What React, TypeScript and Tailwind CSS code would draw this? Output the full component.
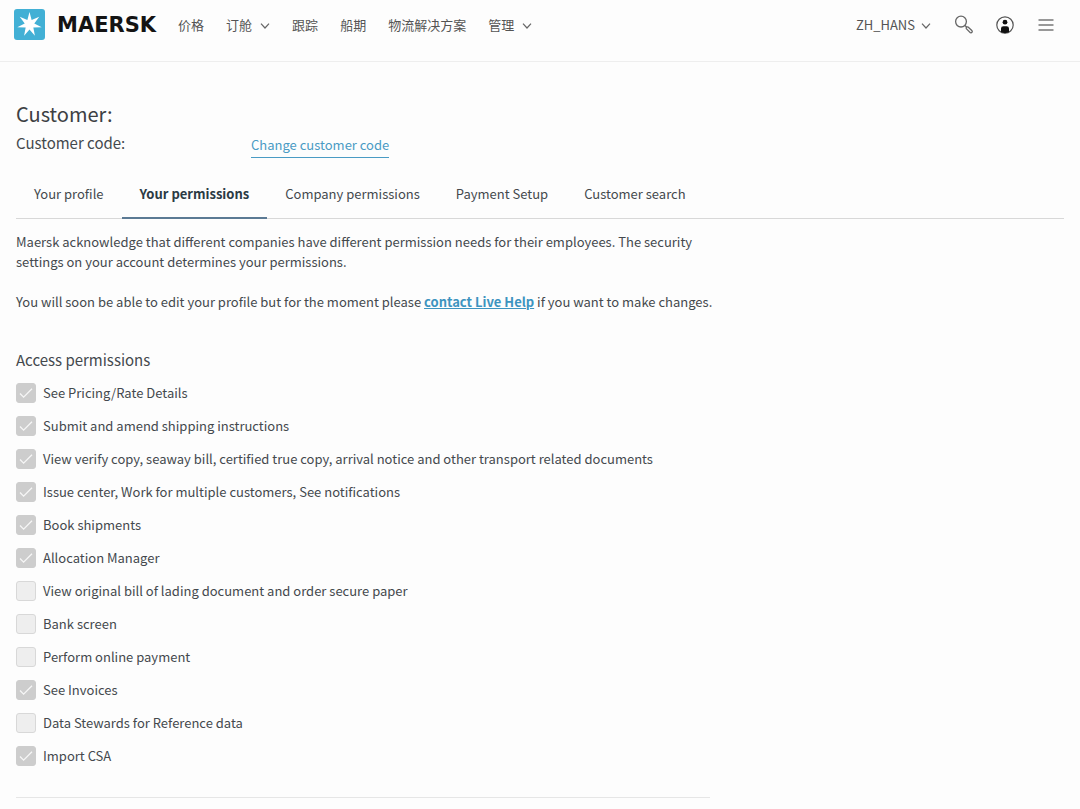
import { useState } from "react";
import type { ReactNode } from "react";

const NAV = [
  { label: "价格", menu: false },
  { label: "订舱", menu: true },
  { label: "跟踪", menu: false },
  { label: "船期", menu: false },
  { label: "物流解决方案", menu: false },
  { label: "管理", menu: true },
];

const TABS = ["Your profile", "Your permissions", "Company permissions", "Payment Setup", "Customer search"];

// Permissions are read-only here, so every box is rendered disabled.
const PERMISSIONS = [
  { id: "pricing", label: "See Pricing/Rate Details", granted: true },
  { id: "instructions", label: "Submit and amend shipping instructions", granted: true },
  {
    id: "documents",
    label: "View verify copy, seaway bill, certified true copy, arrival notice and other transport related documents",
    granted: true,
  },
  { id: "issues", label: "Issue center, Work for multiple customers, See notifications", granted: true },
  { id: "book", label: "Book shipments", granted: true },
  { id: "allocation", label: "Allocation Manager", granted: true },
  { id: "lading", label: "View original bill of lading document and order secure paper", granted: false },
  { id: "bank", label: "Bank screen", granted: false },
  { id: "payment", label: "Perform online payment", granted: false },
  { id: "invoices", label: "See Invoices", granted: true },
  { id: "stewards", label: "Data Stewards for Reference data", granted: false },
  { id: "csa", label: "Import CSA", granted: true },
];

// Seven-pointed star, alternating outer and inner radius.
const STAR_POINTS = Array.from({ length: 14 }, (_, i) => {
  const r = i % 2 === 0 ? 12.5 : 4.9;
  const a = (Math.PI * i) / 7 - Math.PI / 2;
  return `${(15.5 + r * Math.cos(a)).toFixed(2)},${(15.5 + r * Math.sin(a)).toFixed(2)}`;
}).join(" ");

function Logo() {
  return (
    <a href="#home" className="flex items-center gap-3">
      <svg width="31" height="31" viewBox="0 0 31 31" aria-hidden="true">
        <rect width="31" height="31" rx="3" fill="#42b0d5" />
        <polygon points={STAR_POINTS} fill="#fff" />
      </svg>
      <span className="font-['DejaVu_Sans',sans-serif] text-[21px] leading-6 font-bold text-[#141414]">MAERSK</span>
    </a>
  );
}

function Chevron() {
  return (
    <svg width="10" height="6" viewBox="0 0 10 6" fill="none" stroke="#666" strokeWidth="1.2" className="mt-[2px]" aria-hidden="true">
      <path d="M1 0.6 5 5 9 0.6" />
    </svg>
  );
}

function IconButton({ label, children }: { label: string; children: ReactNode }) {
  return (
    <button type="button" aria-label={label} className="flex h-6 w-5 items-center justify-center">
      {children}
    </button>
  );
}

function Header() {
  return (
    <header className="flex h-[62px] items-start border-b border-[#eeeeee] pt-[9px] pr-6 pl-[14px]">
      <Logo />
      <nav className="ml-[22px] flex h-8 items-center gap-[22px] text-[13px] text-[#545454]">
        {NAV.map((n) =>
          n.menu ? (
            <button key={n.label} type="button" className="flex items-center gap-2">
              {n.label}
              <Chevron />
            </button>
          ) : (
            <a key={n.label} href="#nav">
              {n.label}
            </a>
          )
        )}
      </nav>
      <div className="ml-auto flex h-8 items-center gap-[21px]">
        <button type="button" className="mr-[2px] flex items-center gap-[6px] text-[13px] text-[#545454]">
          ZH_HANS
          <Chevron />
        </button>
        <IconButton label="Search">
          <svg width="20" height="20" viewBox="0 0 20 20" fill="none" stroke="#666" strokeWidth="1.3">
            <circle cx="7" cy="6.6" r="5.4" />
            <path d="m11 10.6 1.8 1.6" />
            <path d="M12.3 13.7c-.6-1.1.7-2.3 1.8-1.7l3.7 3.4c1.1 1.1.1 2.8-1.5 2.3z" />
          </svg>
        </IconButton>
        <IconButton label="Account">
          <svg width="18" height="18" viewBox="0 0 18 18">
            <circle cx="9" cy="9" r="8.2" fill="none" stroke="#555" strokeWidth="1.2" />
            <circle cx="9" cy="6.2" r="2.4" fill="#111" />
            <path d="M5 16v-3.4a2.4 2.4 0 0 1 2.4-2.4h3.2a2.4 2.4 0 0 1 2.4 2.4V16a8 8 0 0 1-8 0z" fill="#111" />
          </svg>
        </IconButton>
        <IconButton label="Menu">
          <svg width="16" height="14" viewBox="0 0 16 14" stroke="#777" strokeWidth="1.4">
            <path d="M0.5 2h15M0.5 7h15M0.5 12h15" />
          </svg>
        </IconButton>
      </div>
    </header>
  );
}

function PermissionRow({ id, label, granted }: { id: string; label: string; granted: boolean }) {
  return (
    <li className="flex h-[33px] items-center gap-[7px]">
      <span className="grid">
        <input
          id={id}
          type="checkbox"
          disabled
          defaultChecked={granted}
          className="col-start-1 row-start-1 h-5 w-5 appearance-none rounded-[3px] border border-[#d8d8d8] bg-[#eeeeee] checked:border-[#cdcdcd] checked:bg-[#cdcdcd]"
        />
        {granted && (
          <svg
            className="pointer-events-none col-start-1 row-start-1"
            width="20"
            height="20"
            viewBox="0 0 20 20"
            fill="none"
            stroke="#f6f6f6"
            strokeWidth="1.3"
            aria-hidden="true"
          >
            <path d="m4 10.5 3.6 3.6L16 5.8" />
          </svg>
        )}
      </span>
      <label htmlFor={id}>{label}</label>
    </li>
  );
}

export default function App() {
  const [tab, setTab] = useState("Your permissions");

  return (
    <div className="min-h-screen bg-[#fdfdfd] font-['Noto_Sans_CJK_SC',sans-serif] text-[13px] leading-5 text-[#44494d]">
      <Header />
      <main className="px-4 pt-10">
        <h1 className="text-[20px] leading-6 text-[#3c4043]">Customer:</h1>
        <div className="flex h-[34px] items-center">
          <h2 className="w-[235px] text-[15px] leading-6">Customer code:</h2>
          <a href="#change" className="mt-1 border-b border-[#4a9bc4] leading-6 text-[#4a9bc4]">
            Change customer code
          </a>
        </div>

        <div role="tablist" className="mt-[10px] flex border-b border-[#d8d8d8]">
          {TABS.map((t) => (
            <button
              key={t}
              type="button"
              role="tab"
              aria-selected={t === tab}
              onClick={() => setTab(t)}
              className={
                t === tab
                  ? "-mb-px h-[49px] border-b-2 border-[#5b7a94] px-[18px] font-bold text-[#2b3a44]"
                  : "-mb-px h-[49px] border-b-2 border-transparent px-[18px]"
              }
            >
              {t}
            </button>
          ))}
        </div>

        <div className="mt-[13px] max-w-[720px]">
          <p>
            Maersk acknowledge that different companies have different permission needs for their employees. The security
            settings on your account determines your permissions.
          </p>
          <p className="mt-5">
            You will soon be able to edit your profile but for the moment please{" "}
            <a href="#help" className="font-bold text-[#3d94c0] underline">
              contact Live Help
            </a>{" "}
            if you want to make changes.
          </p>
        </div>

        <section className="mt-9 max-w-[694px] border-b border-[#e6e6e6] pb-[25px]">
          <h2 className="text-[15px] leading-6">Access permissions</h2>
          <ul className="mt-1">
            {PERMISSIONS.map((p) => (
              <PermissionRow key={p.id} {...p} />
            ))}
          </ul>
        </section>
      </main>
    </div>
  );
}
